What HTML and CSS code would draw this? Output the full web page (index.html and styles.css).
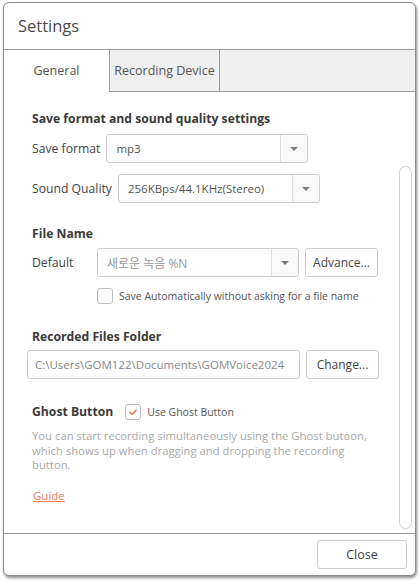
FILE: index.html
```html
<!DOCTYPE html>
<html>
<head>
<meta charset="utf-8">
<link rel="stylesheet" href="styles.css">
</head>
<body>
<div class="window">
  <div class="titlebar">Settings</div>
  <div class="tabs">
    <div class="tab active">General</div>
    <div class="tab second">Recording Device</div>
    <div class="tab-fill"></div>
  </div>
  <div class="body">
    <div class="content">
      <div class="heading h-first">Save format and sound quality settings</div>
      <div class="row r-format">
        <span class="label">Save format</span>
        <div class="select"><span class="value">mp3</span><span class="drop"><span class="arrow"></span></span></div>
      </div>
      <div class="row r-quality">
        <span class="label">Sound Quality</span>
        <div class="select"><span class="value">256KBps/44.1KHz(Stereo)</span><span class="drop"><span class="arrow"></span></span></div>
      </div>

      <div class="heading h-file">File Name</div>
      <div class="row r-default">
        <span class="label label-default">Default</span>
        <div class="select"><span class="value ko">새로운 녹음 %N</span><span class="drop"><span class="arrow"></span></span></div>
        <button class="btn btn-side">Advance...</button>
      </div>
      <div class="check-row">
        <span class="checkbox"></span>
        <span class="small">Save Automatically without asking for a file name</span>
      </div>

      <div class="heading h-folder">Recorded Files Folder</div>
      <div class="row r-path">
        <div class="input"><span class="value">C:\Users\GOM122\Documents\GOMVoice2024</span></div>
        <button class="btn btn-side">Change...</button>
      </div>

      <div class="ghost-row">
        <span class="heading inline">Ghost Button</span>
        <span class="checkbox checked">
          <svg viewBox="0 0 16 16" width="16" height="16"><path d="M4.2 8.3 L7 10.6 L11.6 5.8" fill="none" stroke="#f26b3d" stroke-width="1.6" stroke-linecap="round" stroke-linejoin="round"/></svg>
        </span>
        <span class="small">Use Ghost Button</span>
      </div>
      <p class="desc">You can start recording simultaneously using the Ghost butoon, which shows up when dragging and dropping the recording button.</p>
      <a class="guide">Guide</a>
    </div>
    <div class="scrollbar"></div>
  </div>
  <div class="footer">
    <button class="btn btn-close">Close</button>
  </div>
</div>
</body>
</html>
```
FILE: styles.css
```css
* { box-sizing: border-box; }
html, body { margin: 0; padding: 0; background: #ffffff; }
body {
  font-family: "Open Sans", "Noto Sans", "Noto Sans CJK KR", sans-serif;
  color: #444;
  width: 420px;
  height: 580px;
  overflow: hidden;
}
.window {
  margin: 2px 0 0 3px;
  width: 413px;
  height: 574px;
  border: 1px solid #8c8c8c;
  border-radius: 6px;
  box-shadow: 1px 2px 3px rgba(0,0,0,0.45);
  background: #fff;
  display: flex;
  flex-direction: column;
  overflow: hidden;
}
.titlebar {
  height: 47px;
  flex: none;
  border-bottom: 1px solid #9a9a9a;
  padding-left: 14px;
  line-height: 45px;
  font-size: 16.5px;
  color: #4a4a4a;
}
.tabs {
  display: flex;
  height: 42px;
  flex: none;
}
.tab {
  height: 42px;
  font-size: 12.5px;
  color: #555;
  display: flex;
  align-items: center;
  justify-content: center;
}
.tab.active {
  width: 105px;
  background: #fff;
  padding-bottom: 2px;
}
.tab.second {
  width: 111px;
  background: #efefef;
  border-left: 1px solid #9a9a9a;
  border-right: 1px solid #9a9a9a;
  border-bottom: 1px solid #9a9a9a;
  padding-bottom: 1px;
}
.tab-fill {
  flex: 1;
  background: #efefef;
  border-bottom: 1px solid #9a9a9a;
}
.body {
  flex: 1;
  display: flex;
  min-height: 0;
}
.content {
  flex: 1;
  padding: 18px 0 0 28px;
}
.scrollbar {
  flex: none;
  width: 13px;
  margin: 74px 3px 4px 0;
  border: 1px solid #cfcfcf;
  border-radius: 7px;
}
.heading {
  font-weight: 700;
  font-size: 12.2px;
  line-height: 18px;
  color: #3a3a3a;
}
.heading.inline { display: inline-block; }
.row {
  display: flex;
  align-items: center;
  gap: 6px;
}
.label {
  font-size: 12.2px;
  color: #444;
}
.label-default { width: 59px; }
.h-first { margin-bottom: 6px; }
.r-quality { margin-top: 11px; }
.h-file { margin-top: 22px; margin-bottom: 5px; }
.h-folder { margin-top: 24px; margin-bottom: 4px; }
.select, .input {
  width: 202px;
  height: 29px;
  border: 1px solid #cdcdcd;
  border-radius: 3px;
  display: flex;
  align-items: stretch;
  background: #fff;
}
.input { width: 273px; margin-left: -5px; }
.value {
  flex: 1;
  display: flex;
  align-items: center;
  padding-left: 9px;
  font-size: 11.5px;
  color: #555;
  white-space: nowrap;
  overflow: hidden;
}
.value.ko { color: #999; font-size: 12px; }
.input .value { color: #888; padding-left: 7px; }
.drop {
  width: 27px;
  flex: none;
  border-left: 1px solid #dcdcdc;
  background: #f9f9f9;
  border-radius: 0 3px 3px 0;
  display: flex;
  align-items: center;
  justify-content: center;
}
.arrow {
  width: 0;
  height: 0;
  border-left: 4px solid transparent;
  border-right: 4px solid transparent;
  border-top: 4px solid #7a7a7a;
}
.btn {
  font-family: "Open Sans", "Noto Sans", sans-serif;
  background: #fff;
  border: 1px solid #cdcdcd;
  border-radius: 3px;
  color: #444;
  font-size: 12px;
  height: 29px;
  padding: 0;
}
.btn-side { width: 73px; }
.check-row {
  display: flex;
  align-items: center;
  gap: 6px;
  margin-top: 11px;
  margin-left: 65px;
  height: 16px;
}
.checkbox {
  width: 16px;
  height: 16px;
  border: 1px solid #bdbdbd;
  border-radius: 3px;
  flex: none;
  display: flex;
  align-items: center;
  justify-content: center;
  background: #fff;
}
.checkbox svg { display: block; }
.small {
  font-size: 10.5px;
  color: #555;
}
.ghost-row {
  display: flex;
  align-items: center;
  margin-top: 24px;
  height: 18px;
}
.ghost-row .heading { margin-right: 12px; }
.ghost-row .checkbox { margin-right: 6px; }
.desc {
  margin: 8px 0 0 0;
  font-size: 11.3px;
  line-height: 14.5px;
  color: #a8a8a8;
  width: 350px;
}
.guide {
  display: inline-block;
  margin-top: 16px;
  margin-left: 1px;
  font-size: 11.5px;
  line-height: 14px;
  color: #f47a55;
  text-decoration: underline;
}
.footer {
  flex: none;
  height: 42px;
  border-top: 1px solid #9a9a9a;
  display: flex;
  justify-content: flex-end;
  align-items: flex-start;
  padding: 6px 8px 0 0;
}
.btn-close { width: 90px; font-size: 12.5px; }
```
